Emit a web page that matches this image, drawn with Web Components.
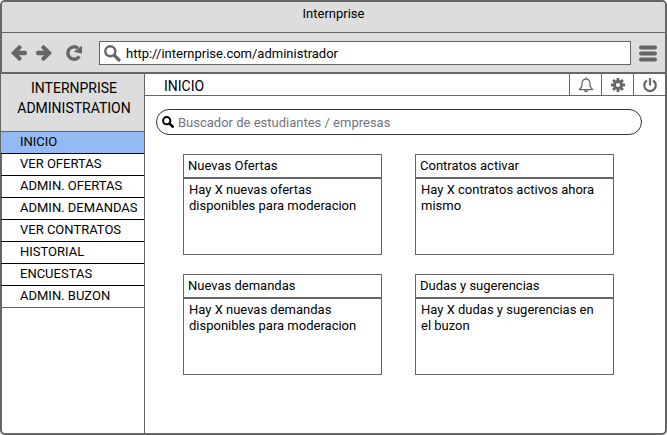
<!DOCTYPE html>
<html lang="es">
<head>
<meta charset="utf-8">
<title>Internprise</title>
<style>
  html, body { height: 100%; margin: 0; }
  body {
    --line: #666;
    --chrome: #ddd;
    --accent: #94baf3;
    background: #fff;
    color: #000;
    font: 13px/16px Roboto, "Liberation Sans", sans-serif;
  }
</style>
</head>
<body>

<browser-window heading="Internprise" url="http://internprise.com/administrador">
  <admin-layout>
    <side-menu slot="side">
      <span slot="brand">INTERNPRISE<br>ADMINISTRATION</span>
      <menu-item current>INICIO</menu-item>
      <menu-item>VER OFERTAS</menu-item>
      <menu-item>ADMIN. OFERTAS</menu-item>
      <menu-item>ADMIN. DEMANDAS</menu-item>
      <menu-item>VER CONTRATOS</menu-item>
      <menu-item>HISTORIAL</menu-item>
      <menu-item>ENCUESTAS</menu-item>
      <menu-item>ADMIN. BUZON</menu-item>
    </side-menu>
    <top-bar>INICIO</top-bar>
    <search-box placeholder="Buscador de estudiantes / empresas"></search-box>
    <card-grid>
      <info-card heading="Nuevas Ofertas">Hay X nuevas ofertas disponibles para moderacion</info-card>
      <info-card heading="Contratos activar">Hay X contratos activos ahora mismo</info-card>
      <info-card heading="Nuevas demandas">Hay X nuevas demandas disponibles para moderacion</info-card>
      <info-card heading="Dudas y sugerencias">Hay X dudas y sugerencias en el buzon</info-card>
    </card-grid>
  </admin-layout>
</browser-window>

<script>
const BASE = `
  * { box-sizing: border-box; }
  button { display: flex; align-items: center; justify-content: center; margin: 0; padding: 0; border: 0; background: none; color: inherit; cursor: pointer; }
  input { font: inherit; color: inherit; border: 0; padding: 0; margin: 0; min-width: 0; background: none; outline: 0; }
  h1, h2, p { margin: 0; font: inherit; }
  svg { display: block; }
`;

function define(name, render) {
  customElements.define(name, class extends HTMLElement {
    connectedCallback() {
      if (this.shadowRoot) return;
      const root = this.attachShadow({ mode: "open" });
      const [css, html] = render(this);
      root.innerHTML = `<style>${BASE}${css}</style>${html}`;
    }
  });
}

define("browser-window", el => [`
  :host { display: flex; flex-direction: column; box-sizing: border-box; min-height: 100%; border: 2px solid var(--line); border-radius: 5px; background: #fff; }
  .title { height: 31px; padding-top: 3px; border-bottom: 1px solid var(--line); background: var(--chrome); border-radius: 3px 3px 0 0; text-align: center; }
  .tools { display: flex; align-items: center; padding: 8px 8px 7px 9px; border-bottom: 2px solid var(--line); background: var(--chrome); color: var(--line); }
  .nav { display: flex; gap: 9px; }
  .reload { margin: 0 17px 0 14px; }
  .url { flex: 1; display: flex; align-items: center; gap: 5px; height: 24px; padding-left: 4px; border: 1px solid var(--line); background: #fff; }
  .url input { flex: 1; height: 20px; color: #000; }
  .menu { margin-left: 8px; }
  main { flex: 1; display: flex; }
  ::slotted(*) { flex: 1; }
  .title h1 { line-height: 18px; }
`, `
  <header>
    <div class="title"><h1>${el.getAttribute("heading")}</h1></div>
    <div class="tools">
      <div class="nav">
        <button aria-label="Atrás"><svg width="16" height="16" viewBox="0 0 16 16"><path d="M0 8L7.500.6q.9-.8 2 0l.9 1q.7 1-.1 1.900L8 5.800h6q2 0 2 2.200t-2 2.200H8l2.300 2.300q.8.900.1 1.900l-.9 1q-1.100.8-2 0z" fill="currentColor"/></svg></button>
        <button aria-label="Adelante"><svg width="16" height="16" viewBox="0 0 16 16"><path transform="translate(16 0) scale(-1 1)" d="M0 8L7.500.6q.9-.8 2 0l.9 1q.7 1-.1 1.900L8 5.800h6q2 0 2 2.200t-2 2.200H8l2.300 2.300q.8.900.1 1.900l-.9 1q-1.100.8-2 0z" fill="currentColor"/></svg></button>
      </div>
      <button class="reload" aria-label="Recargar"><svg width="16" height="16" viewBox="0 0 16 16"><path d="M13.300 11.300A6.200 6.200 0 1 1 12 3.200" fill="none" stroke="currentColor" stroke-width="3.400"/><path d="M16 .8V8.800L7.800 6.800z" fill="currentColor"/></svg></button>
      <label class="url">
        <svg width="17" height="17" viewBox="0 0 17 17" fill="none" stroke="currentColor"><circle cx="6.300" cy="6.300" r="5" stroke-width="2.400"/><path d="M10.500 10.500L15 15" stroke-width="3.200" stroke-linecap="round"/></svg>
        <input type="text" aria-label="Dirección" value="${el.getAttribute("url")}">
      </label>
      <button class="menu" aria-label="Menú"><svg width="18" height="17" viewBox="0 0 18 17" stroke="currentColor" stroke-width="4" stroke-linecap="round"><path d="M2 2.500H16M2 8.500H16M2 14.500H16"/></svg></button>
    </div>
  </header>
  <main><slot></slot></main>`]);

define("admin-layout", () => [`
  :host { display: grid; grid-template-columns: 143px 1fr; }
  aside { border-right: 1px solid var(--line); }
`, `<aside><slot name="side"></slot></aside><section><slot></slot></section>`]);

define("side-menu", () => [`
  :host { display: block; margin-left: -1px; }
  .brand { padding: 4px 0 13px 3px; border-bottom: 1px solid var(--line); background: var(--chrome); text-align: center; font-size: 14px; line-height: 20px; }
  nav { border-bottom: 1px solid var(--line); }
`, `<div class="brand"><slot name="brand"></slot></div><nav><slot></slot></nav>`]);

define("menu-item", () => [`
  :host { display: block; border-bottom: 1px solid #000; }
  :host([current]) { background: var(--accent); }
  :host(:last-child) { border-bottom: 0; }
  a { display: block; padding: 0 4px 1px 19px; line-height: 20px; color: inherit; text-decoration: none; white-space: nowrap; }
`, `<a href="#"><slot></slot></a>`]);

define("top-bar", () => [`
  :host { display: flex; align-items: stretch; height: 22px; box-sizing: border-box; border-bottom: 1px solid var(--line); }
  h1 { flex: 1; padding: 2px 0 0 19px; line-height: 20px; font-size: 14px; }
  button { width: 32px; border-left: 1px solid var(--line); color: var(--line); }
`, `
  <h1><slot></slot></h1>
  <button aria-label="Notificaciones"><svg width="16" height="16" viewBox="0 0 16 16"><path d="M8 1.900C5 2.200 4 4.500 4 7c0 3-1.200 4.700-2.700 5.600h13.400C13.200 11.700 12 10 12 7c0-2.500-1-4.800-4-5.100z" fill="none" stroke="currentColor" stroke-width="1.200" stroke-linejoin="round"/><path d="M8 .5v1.500" stroke="currentColor" stroke-width="1.500"/><path d="M6 13.200a2 2 0 0 0 4 0z" fill="currentColor"/></svg></button>
  <button aria-label="Ajustes"><svg width="14" height="14" viewBox="0 0 14 14" fill="none" stroke="currentColor"><circle cx="7" cy="7" r="3.500" stroke-width="2.800"/><path d="M7 0v3M7 11v3M0 7h3M11 7h3M2.050 2.050l2 2M9.950 9.950l2 2M2.050 11.950l2-2M9.950 4.050l2-2" stroke-width="2.800"/></svg></button>
  <button aria-label="Salir"><svg width="14" height="16" viewBox="0 0 14 16" fill="none" stroke="currentColor" stroke-width="2.200"><path d="M4 3.500a5.700 5.700 0 1 0 6 0"/><path d="M7 1v7.500"/></svg></button>`]);

define("search-box", el => [`
  :host { display: block; padding: 13px 23px 0 11px; }
  label { display: flex; align-items: center; gap: 4px; height: 26px; padding: 0 12px 0 5px; border: 1px solid #333; border-radius: 13px; }
  input { flex: 1; height: 20px; }
  input::placeholder { color: #73737d; opacity: 1; }
`, `
  <label>
    <svg width="12" height="12" viewBox="0 0 12 12" fill="none" stroke="#000"><circle cx="4.700" cy="4.700" r="3.600" stroke-width="2"/><path d="M7.500 7.500L10.700 10.700" stroke-width="2.500" stroke-linecap="round"/></svg>
    <input type="search" aria-label="${el.getAttribute("placeholder")}" placeholder="${el.getAttribute("placeholder")}">
  </label>`]);

define("card-grid", () => [`
  :host { display: grid; grid-template-columns: 1fr 1fr; gap: 19px 33px; padding: 19px 51px 19px 38px; }
`, `<slot></slot>`]);

define("info-card", el => [`
  :host { display: block; border: 1px solid var(--line); }
  h2 { padding: 3px 4px; border-bottom: 2px solid var(--line); }
  p { min-height: 75px; padding: 3px 10px 3px 5px; }
`, `<article><h2>${el.getAttribute("heading")}</h2><p><slot></slot></p></article>`]);
</script>
</body>
</html>
